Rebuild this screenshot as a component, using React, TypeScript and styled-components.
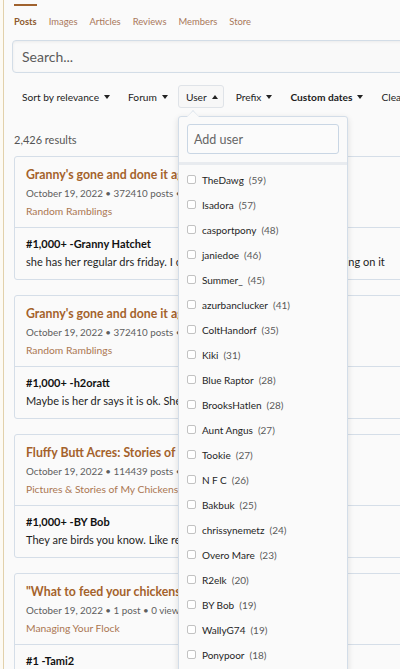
import React from 'react';
import styled, { createGlobalStyle } from 'styled-components';

const GlobalStyle = createGlobalStyle`
  html, body {
    margin: 0;
    padding: 0;
    background: #fafafa;
    overflow: hidden;
  }
  body {
    font-family: Lato, 'Open Sans', Arial, sans-serif;
    color: #141414;
  }
`;

const Shell = styled.div`
  display: flex;
  min-height: 669px;
`;

const Rail = styled.div`
  width: 3px;
  flex: none;
  background: #fdfaf3;
  border-right: 1px solid #e2d1ab;
`;

const Main = styled.main`
  width: 520px;
  flex: none;
  padding: 4px 0 0 10px;
  box-sizing: border-box;
`;

const TabMarker = styled.div`
  width: 23px;
  height: 2px;
  background: #a0622e;
`;

const Tabs = styled.nav`
  display: flex;
  gap: 12px;
  margin-top: 7px;
  height: 16px;
  align-items: center;
`;

const Tab = styled.span<{ $active?: boolean }>`
  font-size: 9.4px;
  font-weight: ${p => (p.$active ? 700 : 400)};
  color: ${p => (p.$active ? '#8f5a2f' : '#a9785a')};
`;

const SearchBox = styled.div`
  margin: 11px 0 0 -2px;
  height: 31px;
  border: 1px solid #d3dde7;
  border-radius: 4px;
  background: #f9f9f9;
  box-shadow: inset 0 1px 3px rgba(0, 0, 0, 0.06);
  display: flex;
  align-items: center;
  padding-left: 9px;
  font-size: 14px;
  color: #5b5b5b;
`;

const FilterBar = styled.div`
  display: flex;
  align-items: center;
  margin-top: 12px;
  height: 23px;
  padding-left: 8px;
  gap: 18px;
`;

const Filter = styled.div<{ $open?: boolean; $bold?: boolean }>`
  position: relative;
  display: flex;
  align-items: center;
  gap: 5px;
  height: 23px;
  box-sizing: border-box;
  font-size: 10.2px;
  font-weight: ${p => (p.$bold ? 700 : 400)};
  color: #1c1c1c;
  white-space: nowrap;
  ${p =>
    p.$open &&
    `
    margin: 0 -6px 0 -8px;
    padding: 0 5px 0 7px;
    border: 1px solid #dfe3e8;
    border-radius: 3px;
    background: #f7f7f7;
  `}
`;

const Caret = styled.span<{ $up?: boolean }>`
  width: 0;
  height: 0;
  border-left: 3px solid transparent;
  border-right: 3px solid transparent;
  ${p => (p.$up ? 'border-bottom: 4px solid #222;' : 'border-top: 4px solid #222;')}
`;

const Results = styled.div`
  margin-top: 23px;
  font-size: 11px;
  color: #555;
  height: 18px;
  line-height: 18px;
`;

const CardList = styled.div`
  display: flex;
  flex-direction: column;
  gap: 15px;
  margin-top: 7px;
`;

const Card = styled.article`
  border: 1px solid #d5dee8;
  border-radius: 3px;
  background: #fafafa;
`;

const CardHead = styled.div`
  padding: 9px 11px 7px;
  border-bottom: 1px solid #d5dee8;
`;

const CardTitle = styled.div`
  font-size: 12.3px;
  font-weight: 700;
  color: #a4622b;
  line-height: 18px;
  white-space: nowrap;
`;

const Meta = styled.div`
  font-size: 9.8px;
  color: #5e5e5e;
  line-height: 18px;
  white-space: nowrap;
`;

const ForumLink = styled.div`
  font-size: 10.3px;
  color: #ab7752;
  line-height: 18px;
`;

const CardBody = styled.div`
  padding: 7px 11px 8px;
`;

const PostTitle = styled.div`
  font-size: 11px;
  font-weight: 700;
  line-height: 18px;
  color: #111;
`;

const Snippet = styled.div`
  font-size: 11px;
  line-height: 18px;
  color: #1e1e1e;
  white-space: nowrap;
`;

const Menu = styled.div`
  position: absolute;
  top: 30px;
  left: -1px;
  width: 168px;
  height: 560px;
  background: #fafafa;
  border: 1px solid #d3dde8;
  border-radius: 3px;
  box-shadow: 0 2px 6px rgba(0, 0, 0, 0.12);
  z-index: 10;
  font-weight: 400;

  &::before,
  &::after {
    content: '';
    position: absolute;
    left: 8px;
    width: 0;
    height: 0;
    border-left: 6px solid transparent;
    border-right: 6px solid transparent;
  }
  &::before {
    top: -7px;
    border-bottom: 7px solid #d3dde8;
  }
  &::after {
    top: -6px;
    border-bottom: 6px solid #fafafa;
  }
`;

const MenuSearch = styled.div`
  padding: 7px 8px 8px;
  border-bottom: 3px solid #e8ebef;
`;

const AddUser = styled.div`
  height: 30px;
  box-sizing: border-box;
  border: 1px solid #c9d6e4;
  border-radius: 3px;
  background: #fbfbfb;
  display: flex;
  align-items: center;
  padding-left: 6px;
  font-size: 12.5px;
  color: #666;
`;

const UserList = styled.ul`
  list-style: none;
  margin: 0;
  padding: 2px 0 0 8px;
`;

const UserRow = styled.li`
  display: flex;
  align-items: center;
  height: 25px;
  font-size: 10px;
  color: #1f1f1f;
`;

const Box = styled.span`
  width: 7px;
  height: 7px;
  border: 1px solid #c2c2c2;
  border-radius: 2px;
  background: #fff;
  margin-right: 6px;
  flex: none;
`;

const Count = styled.span`
  color: #5a5a5a;
  margin-left: 5px;
`;

const users: [string, number][] = [
  ['TheDawg', 59],
  ['Isadora', 57],
  ['casportpony', 48],
  ['janiedoe', 46],
  ['Summer_', 45],
  ['azurbanclucker', 41],
  ['ColtHandorf', 35],
  ['Kiki', 31],
  ['Blue Raptor', 28],
  ['BrooksHatlen', 28],
  ['Aunt Angus', 27],
  ['Tookie', 27],
  ['N F C', 26],
  ['Bakbuk', 25],
  ['chrissynemetz', 24],
  ['Overo Mare', 23],
  ['R2elk', 20],
  ['BY Bob', 19],
  ['WallyG74', 19],
  ['Ponypoor', 18],
];

const results = [
  {
    title: "Granny's gone and done it again!",
    meta: 'October 19, 2022 • 372410 posts • 25M views',
    forum: 'Random Ramblings',
    post: '#1,000+ -Granny Hatchet',
    snippet: 'she has her regular drs friday. I called the home and they said working on it',
  },
  {
    title: "Granny's gone and done it again!",
    meta: 'October 19, 2022 • 372410 posts • 25M views',
    forum: 'Random Ramblings',
    post: '#1,000+ -h2oratt',
    snippet: 'Maybe is her dr says it is ok. She might be able to come home soon',
  },
  {
    title: 'Fluffy Butt Acres: Stories of the flock',
    meta: 'October 19, 2022 • 114439 posts • 6M views',
    forum: 'Pictures & Stories of My Chickens',
    post: '#1,000+ -BY Bob',
    snippet: 'They are birds you know. Like really dumb birds sometimes',
  },
  {
    title: '"What to feed your chickens" question',
    meta: 'October 19, 2022 • 1 post • 0 views',
    forum: 'Managing Your Flock',
    post: '#1 -Tami2',
    snippet: 'I have a question about what to feed my chickens',
  },
];

const tabs = ['Posts', 'Images', 'Articles', 'Reviews', 'Members', 'Store'];

export default function App() {
  return (
    <>
      <GlobalStyle />
      <Shell>
        <Rail />
        <Main>
          <TabMarker />
          <Tabs>
            {tabs.map((t, i) => (
              <Tab key={t} $active={i === 0}>
                {t}
              </Tab>
            ))}
          </Tabs>
          <SearchBox>Search...</SearchBox>
          <FilterBar>
            <Filter>
              <span>Sort by relevance</span>
              <Caret />
            </Filter>
            <Filter>
              <span>Forum</span>
              <Caret />
            </Filter>
            <Filter $open>
              <span>User</span>
              <Caret $up />
              <Menu>
                <MenuSearch>
                  <AddUser>Add user</AddUser>
                </MenuSearch>
                <UserList>
                  {users.map(([name, n]) => (
                    <UserRow key={name}>
                      <Box />
                      {name}
                      <Count>({n})</Count>
                    </UserRow>
                  ))}
                </UserList>
              </Menu>
            </Filter>
            <Filter>
              <span>Prefix</span>
              <Caret />
            </Filter>
            <Filter $bold>
              <span>Custom dates</span>
              <Caret />
            </Filter>
            <Filter>
              <span>Clear filters</span>
            </Filter>
          </FilterBar>
          <Results>2,426 results</Results>
          <CardList>
            {results.map((r, i) => (
              <Card key={i}>
                <CardHead>
                  <CardTitle>{r.title}</CardTitle>
                  <Meta>{r.meta}</Meta>
                  <ForumLink>{r.forum}</ForumLink>
                </CardHead>
                <CardBody>
                  <PostTitle>{r.post}</PostTitle>
                  <Snippet>{r.snippet}</Snippet>
                </CardBody>
              </Card>
            ))}
          </CardList>
        </Main>
      </Shell>
    </>
  );
}
